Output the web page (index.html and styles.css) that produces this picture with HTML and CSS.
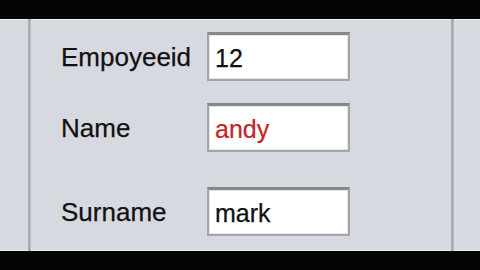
FILE: index.html
```html
<!DOCTYPE html>
<html>
<head>
<meta charset="utf-8">
<link rel="stylesheet" href="styles.css">
</head>
<body>
<div class="bar"></div>
<div class="main">
  <div class="side-left"></div>
  <div class="rule"></div>
  <div class="form">
    <div class="row r1">
      <span class="label">Empoyeeid</span>
      <div class="field">12</div>
    </div>
    <div class="row r2">
      <span class="label">Name</span>
      <div class="field red">andy</div>
    </div>
    <div class="row r3">
      <span class="label">Surname</span>
      <div class="field">mark</div>
    </div>
  </div>
  <div class="rule"></div>
  <div class="side-right"></div>
</div>
<div class="bar"></div>
</body>
</html>
```
FILE: styles.css
```css
html, body {
  margin: 0;
  padding: 0;
  width: 480px;
  height: 270px;
  overflow: hidden;
  background: #000;
  font-family: "Liberation Sans", Arial, sans-serif;
}
.bar {
  height: 19px;
  background: #050505;
}
.main {
  height: 232px;
  display: flex;
  background: #d6d9e0;
  box-shadow: inset 0 1px 0 #eef0f4, inset 0 -1px 0 #eef0f4;
}
.side-left {
  width: 28px;
}
.rule {
  width: 3px;
  background: linear-gradient(to right, #aeb1b8, #a4a7ae 50%, #c4c7ce);
}
.form {
  width: 420px;
  padding-left: 30px;
  display: flex;
  flex-direction: column;
  box-sizing: border-box;
}
.side-right {
  flex: 1;
}
.row {
  display: flex;
  align-items: center;
  height: 49px;
}
.r1 { margin-top: 13px; }
.r2 { margin-top: 22px; }
.r3 { margin-top: 35px; }
.label {
  width: 146px;
  font-size: 26px;
  color: #111;
  padding-top: 2px;
  -webkit-text-stroke: 0.25px #111;
}
.field {
  width: 143px;
  height: 49px;
  box-sizing: border-box;
  background: #fff;
  border: 2px solid #a3a5a9;
  border-top: 3px solid #85878b;
  box-shadow: inset 0 0 0 1px #e4e6ea;
  padding-left: 6px;
  font-size: 25px;
  line-height: 46px;
  color: #111;
  -webkit-text-stroke: 0.25px #111;
}
.red {
  color: #c3252a;
  -webkit-text-stroke: 0.2px #c3252a;
}
```
